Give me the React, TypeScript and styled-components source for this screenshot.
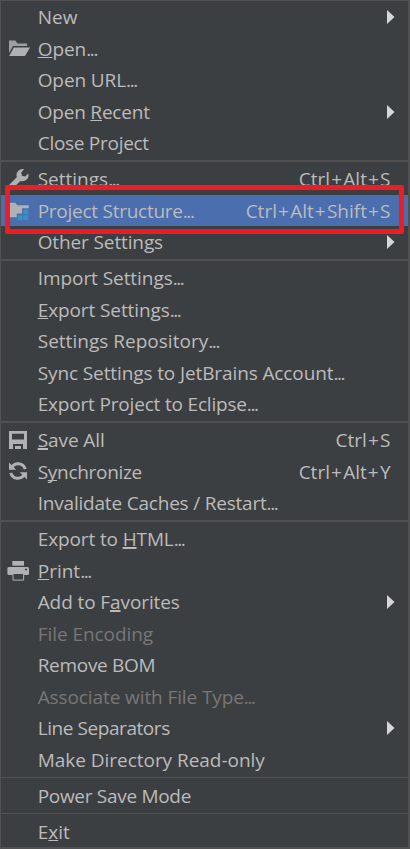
import React from 'react';
import styled, { createGlobalStyle, css } from 'styled-components';

const Global = createGlobalStyle`
  html, body { margin: 0; padding: 0; background: #3c3f41; }
  body { overflow: hidden; }
`;

const Menu = styled.div`
  position: relative;
  box-sizing: border-box;
  width: 410px;
  height: 849px;
  overflow: hidden;
  background: #3c3f41;
  border: solid #515151;
  border-width: 1px 2px 2px 1px;
  font: 19px/33px 'Open Sans', 'Noto Sans', sans-serif;
  color: #bbbbbb;
  user-select: none;
`;

const Row = styled.div<{ $h: number; $active?: boolean; $disabled?: boolean }>`
  display: flex;
  align-items: flex-start;
  height: ${p => p.$h}px;
  padding-right: 14px;
  white-space: pre;
  ${p => p.$active && css`background: #4b6eaf;`}
  ${p => p.$disabled && css`color: #777777;`}
`;

const Gutter = styled.div`
  flex: 0 0 36.7px;
  height: 31px;
`;

const Icon = styled.svg`
  display: block;
  width: 36px;
  height: 31px;
  fill: #afb1b3;
`;

const Label = styled.span<{ $track: number }>`
  flex: 1;
  letter-spacing: ${p => p.$track}px;
`;

const Mnemonic = styled.span<{ $thick?: boolean }>`
  text-decoration: underline;
  text-decoration-thickness: ${p => (p.$thick ? 2 : 1)}px;
  text-underline-offset: 1px;
  text-decoration-skip-ink: none;
`;

const Dots = styled.span`
  letter-spacing: -1.4px;
`;

const Shortcut = styled.span`
  margin-right: 3.5px;
`;

const Plus = styled.span`
  margin: 0 1.15px;
`;

const Arrow = styled.svg`
  display: block;
  width: 8px;
  height: 14px;
  margin: 9px -1px 0 0;
  fill: #d4d6d8;
`;

const Separator = styled.div<{ $line: number }>`
  box-sizing: border-box;
  height: 4px;
  padding-top: 1px;

  &::before {
    content: '';
    display: block;
    height: ${p => p.$line}px;
    background: #515151;
  }
`;

const Highlight = styled.div`
  position: absolute;
  left: 4px;
  top: 184px;
  width: 399px;
  height: 49px;
  box-sizing: border-box;
  border: 5px solid #ee1c24;
  border-radius: 2px;
`;

const icons = {
  open: (
    <>
      <path d="M8 7.5H14.3L16.5 10.5H26V13H12L8 20Z" fill="#9c9fa1" />
      <path d="M12.8 14.5H29L24 23H8.2Z" />
    </>
  ),
  wrench: (
    <path d="M23.2 6.3L20.2 9.4L21 12.7L24.2 13.4L27.3 10.4A6.2 6.2 0 0 1 19.5 18L11.5 25.5L8 22L15.8 14.2A6.2 6.2 0 0 1 23.2 6.3Z" />
  ),
  structure: (
    <>
      <path d="M8 7.7H14.2L16.2 10.2H27.7V13.3H21V18.5H15.7V22.3H8Z" />
      <path d="M22.3 14.7h5v4.6h-5zM16.7 20.2h4.8v4.8h-4.8zM22.3 20.2h5v4.8h-5z" fill="#3592c4" />
    </>
  ),
  save: (
    <path
      fillRule="evenodd"
      d="M8 7H26V25H22V20H12V25H8ZM11 9.7V15.5H23V9.7ZM14 22h6v3h-6z"
    />
  ),
  sync: (
    <>
      <path d="M10.6 11.8A7.3 7.3 0 0 1 24.2 13.2M23.4 18.2A7.3 7.3 0 0 1 9.8 16.8" fill="none" stroke="#afb1b3" strokeWidth="3" />
      <path d="M8 6.6V13.8H15.2ZM26 23.4V16.2H18.8Z" />
    </>
  ),
  print: (
    <>
      <path d="M11.3 6H23v4.7H11.3z" />
      <rect x="6.4" y="12" width="21.6" height="8" rx="1.5" />
      <path d="M12 18.5H22.6V25.1H12Z" fill="#3c3f41" stroke="#afb1b3" />
      <path d="M24 13.7h2v1.6h-2z" fill="#3c3f41" />
    </>
  ),
};

type Item = {
  text: string; // "&" marks the mnemonic letter
  h: number;
  track?: number;
  icon?: keyof typeof icons;
  keys?: string;
  sub?: boolean;
  active?: boolean;
  disabled?: boolean;
  thick?: boolean;
};

const groups: { line: number; items: Item[] }[] = [
  {
    line: 2,
    items: [
      { text: 'New', h: 32, track: 0, sub: true },
      { text: '&Open...', h: 31, track: -0.05, icon: 'open' },
      { text: 'Open URL...', h: 32, track: -0.1 },
      { text: 'Open &Recent', h: 31, track: -0.2, sub: true },
      { text: 'Close Project', h: 32, track: -0.28 },
    ],
  },
  {
    line: 2,
    items: [
      { text: 'Settings...', h: 32, track: 0, icon: 'wrench', keys: 'Ctrl+Alt+S' },
      { text: 'Project Structure...', h: 31, track: -0.26, icon: 'structure', keys: 'Ctrl+Alt+Shift+S', active: true },
      { text: 'Other Settings', h: 32, track: -0.12, sub: true },
    ],
  },
  {
    line: 2,
    items: [
      { text: 'Import Settings...', h: 32, track: -0.06 },
      { text: '&Export Settings...', h: 31, track: -0.1 },
      { text: 'Settings Repository...', h: 32, track: 0.02 },
      { text: 'Sync Settings to JetBrains Account...', h: 31, track: -0.11 },
      { text: 'Export Project to Eclipse...', h: 32, track: -0.18 },
    ],
  },
  {
    line: 2,
    items: [
      { text: '&Save All', h: 32, track: -0.08, icon: 'save', keys: 'Ctrl+S', thick: true },
      { text: 'S&ynchronize', h: 31, track: -0.3, icon: 'sync', keys: 'Ctrl+Alt+Y' },
      { text: 'Invalidate Caches / Restart...', h: 32, track: -0.2 },
    ],
  },
  {
    line: 1,
    items: [
      { text: 'Export to &HTML...', h: 32, track: -0.12, thick: true },
      { text: '&Print...', h: 31, track: 0, icon: 'print' },
      { text: 'Add to F&avorites', h: 32, track: -0.1, sub: true, thick: true },
      { text: 'File Encoding', h: 31, track: -0.06, disabled: true },
      { text: 'Remove BOM', h: 32, track: -0.3 },
      { text: 'Associate with File Type...', h: 31, track: -0.1, disabled: true },
      { text: 'Line Separators', h: 32, track: -0.43, sub: true },
      { text: 'Make Directory Read-only', h: 32, track: -0.03 },
    ],
  },
  { line: 1, items: [{ text: 'Power Save Mode', h: 32, track: -0.3 }] },
  { line: 0, items: [{ text: 'E&xit', h: 31, track: 0 }] },
];

function LabelText({ text, thick }: { text: string; thick?: boolean }) {
  const dots = text.endsWith('...');
  const body = dots ? text.slice(0, -3) : text;
  const at = body.indexOf('&');
  return (
    <>
      {at < 0 ? body : (
        <>
          {body.slice(0, at)}
          <Mnemonic $thick={thick}>{body[at + 1]}</Mnemonic>
          {body.slice(at + 2)}
        </>
      )}
      {dots && <Dots>...</Dots>}
    </>
  );
}

function MenuItem({ item }: { item: Item }) {
  return (
    <Row $h={item.h} $active={item.active} $disabled={item.disabled}>
      <Gutter>{item.icon && <Icon viewBox="0 0 36 31">{icons[item.icon]}</Icon>}</Gutter>
      <Label $track={item.track ?? 0}>
        <LabelText text={item.text} thick={item.thick} />
      </Label>
      {item.keys && (
        <Shortcut>
          {item.keys.split('+').map((key, i) => (
            <React.Fragment key={i}>
              {i > 0 && <Plus>+</Plus>}
              {key}
            </React.Fragment>
          ))}
        </Shortcut>
      )}
      {item.sub && (
        <Arrow viewBox="0 0 8 14">
          <path d="M0 0L7.5 7L0 14Z" />
        </Arrow>
      )}
    </Row>
  );
}

export default function App() {
  return (
    <>
      <Global />
      <Menu>
        {groups.map((group, i) => (
          <React.Fragment key={i}>
            {group.items.map(item => <MenuItem key={item.text} item={item} />)}
            {group.line > 0 && <Separator $line={group.line} />}
          </React.Fragment>
        ))}
        <Highlight />
      </Menu>
    </>
  );
}
